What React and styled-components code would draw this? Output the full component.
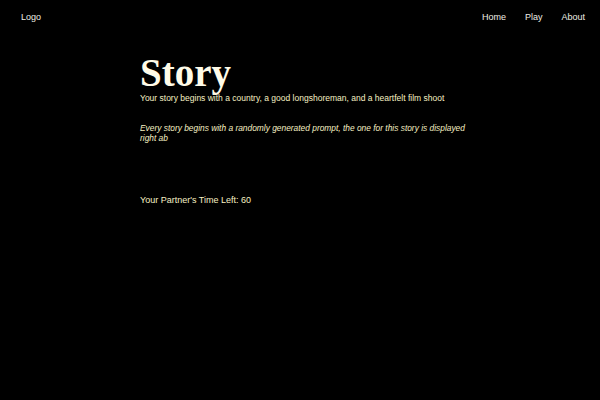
import styled, { createGlobalStyle } from 'styled-components';

const GlobalStyle = createGlobalStyle`
  html, body {
    margin: 0;
    background: #000;
    color: #f6f0c4;
    font-family: 'Liberation Sans', sans-serif;
  }
`;

const Page = styled.div`
  width: 600px;
  height: 400px;
  background: #000;
`;

const Nav = styled.nav`
  display: flex;
  justify-content: space-between;
  align-items: center;
  height: 34px;
  padding: 0 15px 0 21px;
  font-size: 9px;
`;

const Links = styled.div`
  display: flex;
  gap: 19px;
`;

const Link = styled.a`
  color: #eeeee4;
  text-decoration: none;
`;

const Main = styled.main`
  width: 340px;
  margin-left: 140px;
`;

const Title = styled.h1`
  margin: 19px 0 0;
  font-family: 'Liberation Serif', serif;
  font-weight: 700;
  font-size: 39px;
  line-height: 40px;
  color: #fffbe8;
`;

const Sub = styled.p`
  margin: -1px 0 0;
  font-size: 8.5px;
  line-height: 12px;
`;

const Prompt = styled.p`
  margin: 19px 0 0;
  font-size: 8.4px;
  line-height: 10px;
  font-style: italic;
`;

const Timer = styled.p`
  margin: 52px 0 0;
  font-size: 9px;
`;

export default function App() {
  return (
    <Page>
      <GlobalStyle />
      <Nav>
        <Link>Logo</Link>
        <Links>
          <Link>Home</Link>
          <Link>Play</Link>
          <Link>About</Link>
        </Links>
      </Nav>
      <Main>
        <Title>Story</Title>
        <Sub>Your story begins with a country, a good longshoreman, and a heartfelt film shoot</Sub>
        <Prompt>
          Every story begins with a randomly generated prompt, the one for this story is displayed right ab
        </Prompt>
        <Timer>Your Partner's Time Left: 60</Timer>
      </Main>
    </Page>
  );
}
